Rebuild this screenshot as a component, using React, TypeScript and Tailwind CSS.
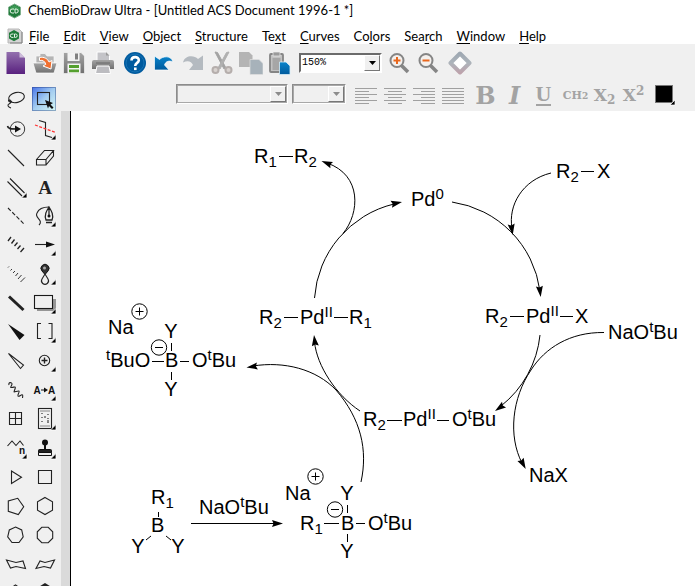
import React from "react";

function Logo() {
  return (
    <svg width="15" height="16" viewBox="0 0 15 16" aria-hidden="true" className="shrink-0">
      <path d="M7.5 1L13.5 4.2V11.8L7.5 15L1.5 11.8V4.2Z" fill="#1f7a3a" stroke="#7fb08d" strokeWidth="1" />
      <path d="M7.5 2L12.5 5V7.5H2.5V5Z" fill="#3c9a55" />
      <path d="M7 6H5.2a2 2 0 0 0 0 4H7M8 6v4h1.2a2 2 0 0 0 0-4Z" fill="none" stroke="#e8f5e9" strokeWidth="1" />
    </svg>
  );
}

function DocLogo() {
  return (
    <svg width="16" height="16" viewBox="0 0 16 16" aria-hidden="true" className="shrink-0">
      <path d="M1 1H12L15 4V15H1Z" fill="#d4d4d4" stroke="#b8b8b8" />
      <path d="M15 4V15H3" fill="none" stroke="#808080" />
      <path d="M7 2L12 4.800V10.500L7 13.300L2 10.500V4.800Z" fill="#1f7a3a" />
      <path d="M6.5 6H5a1.700 1.700 0 0 0 0 3.400H6.500M7.500 6v3.400h1a1.700 1.700 0 0 0 0-3.400Z" fill="none" stroke="#e8f5e9" strokeWidth="1" />
    </svg>
  );
}

const menus: [string, string, string][] = [
  ["", "F", "ile"],
  ["", "E", "dit"],
  ["", "V", "iew"],
  ["", "O", "bject"],
  ["", "S", "tructure"],
  ["Te", "x", "t"],
  ["", "C", "urves"],
  ["Co", "l", "ors"],
  ["Sea", "r", "ch"],
  ["", "W", "indow"],
  ["", "H", "elp"],
];

function BarButton({ label, children }: { label: string; children: React.ReactNode }) {
  return (
    <button type="button" aria-label={label} title={label} className="flex h-7 w-[29px] shrink-0 items-center justify-center">
      <svg width="24" height="24" viewBox="0 0 24 24" aria-hidden="true">
        {children}
      </svg>
    </button>
  );
}

function Combo({ label, value, box, disabled }: { label: string; value: string; box: string; disabled?: boolean }) {
  return (
    <div className={`relative h-5 shrink-0 border-2 border-b-white border-r-white ${disabled ? "border-l-[#8c8c8c] border-t-[#8c8c8c] bg-[#f0f0f0] outline-1 -outline-offset-2 outline-[#a8a8a8]" : "border-l-[#6b6b6b] border-t-[#6b6b6b] bg-white"} ${box}`}>
      <select aria-label={label} disabled={disabled} defaultValue={value} className="block h-4 w-full appearance-none bg-transparent pl-px font-['Liberation_Mono',monospace] text-[10px] leading-4 text-black outline-none">
        <option>{value}</option>
      </select>
      <span className="pointer-events-none absolute right-0 top-0 flex h-4 w-4 items-center justify-center border border-b-[#777] border-l-white border-r-[#777] border-t-white bg-[#f0f0f0]">
        <svg width="7" height="4" viewBox="0 0 7 4" aria-hidden="true">
          <path d="M0 0H7L3.5 4Z" fill={disabled ? "#8c8c8c" : "#000"} />
        </svg>
      </span>
    </div>
  );
}

function MainToolbar() {
  return (
    <div role="toolbar" aria-label="Main" className="flex h-[37px] shrink-0 items-center bg-[#f0f0f0] pl-px">
      <svg width="0" height="0" className="absolute" aria-hidden="true">
        <defs>
          <linearGradient id="violet" x1="0" y1="0" x2="0" y2="1">
            <stop offset="0" stopColor="#9370ae" />
            <stop offset="1" stopColor="#59217f" />
          </linearGradient>
          <linearGradient id="steel" x1="0" y1="0" x2="0" y2="1">
            <stop offset="0" stopColor="#a4a4a4" />
            <stop offset="1" stopColor="#707070" />
          </linearGradient>
          <linearGradient id="diamond" x1="0" y1="0" x2="0" y2="1">
            <stop offset="0" stopColor="#9ea8b2" />
            <stop offset="0.5" stopColor="#adb4bb" />
            <stop offset="1" stopColor="#bda3ac" />
          </linearGradient>
          <linearGradient id="azure" x1="0" y1="0" x2="0" y2="1">
            <stop offset="0" stopColor="#0a84cb" />
            <stop offset="1" stopColor="#005a9c" />
          </linearGradient>
        </defs>
      </svg>
      <BarButton label="New document">
        <path d="M2.500 1H15L21 7V23H2.500Z" fill="url(#violet)" />
        <path d="M15.500 1V6.500H21Z" fill="#cdbcda" />
        <path d="M15 0L21.500 6.500V0Z" fill="#f0f0f0" />
      </BarButton>
      <BarButton label="Open">
        <path d="M3 12V5H7V2.500H12L14 5H21V12Z" fill="#b5b5b5" stroke="#f8f8f8" strokeWidth=".7" />
        <path d="M0 12H24L21 22H3Z" fill="url(#steel)" stroke="#fff" strokeWidth=".7" />
        <path d="M6.500 6.500C11 5.500 15 8 16 11L19 9.500L18 18L10 15L12.800 13.300C12 10.500 10 8.800 6.500 9.500Z" fill="#f07030" stroke="#fff" />
      </BarButton>
      <BarButton label="Save">
        <path d="M1.500 1.500H19L22.500 5V22.500H1.500Z" fill="url(#steel)" stroke="#fff" strokeWidth=".6" />
        <rect x="5.500" y="1.500" width="12" height="8.500" fill="#f2f2f2" />
        <rect x="13" y="2.500" width="3" height="6" fill="#808080" />
        <rect x="5.500" y="12.500" width="13" height="10" fill="#f5f5f5" />
        <path d="M7 15.500H17M7 19.800H17" stroke="#55a02f" strokeWidth="2.800" />
      </BarButton>
      <BarButton label="Print">
        <path d="M6 1H15L18.500 4.500V10H6Z" fill="#c4c4c8" stroke="#fff" />
        <path d="M15 1V4.500H18.500Z" fill="#9a9a9a" />
        <path d="M1 11Q1 9 3 9H21Q23 9 23 11V18H1Z" fill="url(#steel)" />
        <path d="M5 12H19" stroke="#6a6a6a" />
        <path d="M6 15H18L19.500 22.500H4.500Z" fill="#bcbcc0" stroke="#fff" />
      </BarButton>
      <span className="w-[3px] shrink-0" />
      <BarButton label="Help">
        <circle cx="12" cy="12" r="11" fill="#005b9f" />
        <circle cx="12" cy="12" r="9" fill="none" stroke="#1773b4" />
        <path d="M8.500 9.500C8.500 5 15.800 5 15.800 9.200C15.800 12 12.200 11.800 12.200 15" fill="none" stroke="#fff" strokeWidth="2.600" />
        <rect x="11" y="16.500" width="2.600" height="2.600" fill="#fff" />
      </BarButton>
      <BarButton label="Undo">
        <path d="M2.500 5L7.500 8.500C11 5 19 4 21 11C17 9 13.500 10.500 12.500 14L17 19H2.500Z" fill="url(#azure)" stroke="#fff" strokeWidth=".7" />
      </BarButton>
      <BarButton label="Redo">
        <path d="M22 4.500L17 8C13 4 4 4 2 11.500C7 9 10.500 10.500 12 14L8 19H22Z" fill="#b4bac0" />
      </BarButton>
      <BarButton label="Cut">
        <path d="M5 1L7.500 1.500L16 17L14 18Z" fill="#a3a3a3" stroke="#a3a3a3" />
        <path d="M19 1L16.500 1.500L8 17L10 18Z" fill="#b0b0b0" stroke="#b0b0b0" />
        <circle cx="5.500" cy="19" r="3" fill="#d8d2cf" stroke="#b5aeac" strokeWidth="2" />
        <circle cx="18.500" cy="19" r="3" fill="#d8d2cf" stroke="#b5aeac" strokeWidth="2" />
      </BarButton>
      <BarButton label="Copy">
        <path d="M0 1H10L13.500 4.500V16H0Z" fill="#b4b4b4" />
        <path d="M11 8.500H20L24 12.500V23.500H11Z" fill="#a7b2ba" stroke="#e0e0e0" strokeWidth=".7" />
      </BarButton>
      <BarButton label="Paste">
        <rect x="2" y="3" width="13" height="18" rx="1" fill="#c2c2c2" stroke="#858585" strokeWidth="1.800" />
        <rect x="4.500" y="7" width="8" height="12" fill="#a6a6a6" />
        <rect x="5" y="1" width="7" height="4" fill="#9a9a9a" stroke="#eee" strokeWidth=".7" />
        <path d="M11.500 11H18L22 15V23.500H11.500Z" fill="url(#azure)" stroke="#d8edf8" strokeWidth=".8" />
      </BarButton>
      <span className="w-[5px] shrink-0" />
      <Combo label="Zoom level" value="150%" box="w-[83px]" />
      <span className="w-[2px] shrink-0" />
      <BarButton label="Zoom in">
        <path d="M14 14L21 21" stroke="#858585" strokeWidth="3.600" />
        <circle cx="10" cy="9.500" r="6.500" fill="#f4f0ed" stroke="#858585" strokeWidth="2" />
        <path d="M6.500 9.500H13.500M10 6V13" stroke="#e8661c" strokeWidth="2" />
      </BarButton>
      <BarButton label="Zoom out">
        <path d="M14 14L21 21" stroke="#858585" strokeWidth="3.600" />
        <circle cx="10" cy="9.500" r="6.500" fill="#f4f0ed" stroke="#858585" strokeWidth="2" />
        <path d="M6.500 9.500H13.500" stroke="#e8661c" strokeWidth="2" />
      </BarButton>
      <span className="w-[3px] shrink-0" />
      <BarButton label="Chemical properties">
        <path d="M12 2.500L21.500 12L12 21.500L2.500 12Z" fill="#fff" stroke="url(#diamond)" strokeWidth="4" strokeLinejoin="round" />
      </BarButton>
    </div>
  );
}

const aligns: [string, string][] = [
  ["Align left", "M1 4.500H23M1 7.500H15M1 10.500H23M1 13.500H15M1 16.500H23M1 19.500H15"],
  ["Align center", "M1 4.500H23M5 7.500H19M1 10.500H23M5 13.500H19M1 16.500H23M5 19.500H19"],
  ["Align right", "M1 4.500H23M9 7.500H23M1 10.500H23M9 13.500H23M1 16.500H23M9 19.500H23"],
  ["Justify", "M1 4.500H23M1 7.500H23M1 10.500H23M1 13.500H23M1 16.500H23M1 19.500H23"],
];

function FormatToolbar() {
  const glyph = "flex h-6 w-[29px] shrink-0 items-center justify-center font-['DejaVu_Serif',serif] font-bold text-[#a3a3a3]";
  return (
    <div role="toolbar" aria-label="Text format" className="flex h-[30px] shrink-0 items-start bg-[#f0f0f0] pl-[115px] pt-[3px]">
      <Combo label="Font" value="" box="w-[112px]" disabled />
      <span className="w-1 shrink-0" />
      <Combo label="Font size" value="" box="w-[54px]" disabled />
      <span className="w-[5px] shrink-0" />
      {aligns.map(([label, d]) => (
        <button key={label} type="button" aria-label={label} className="flex h-6 w-[29px] shrink-0 items-center justify-center">
          <svg width="24" height="24" viewBox="0 0 24 24" aria-hidden="true">
            <path d={d} stroke="#a0a0a0" />
          </svg>
        </button>
      ))}
      <span className="w-1 shrink-0" />
      <button type="button" className={`${glyph} text-[24px]`}>B</button>
      <button type="button" className={`${glyph} text-[24px] italic`}>I</button>
      <button type="button" className={`${glyph} text-[22px]`}>
        <span className="h-5 border-b-2 border-[#a3a3a3] font-['Liberation_Serif',serif] leading-4">U</span>
      </button>
      <span className="w-[3px] shrink-0" />
      <button type="button" className={`${glyph} text-[11px]`}>
        <span>CH<sub className="bottom-0 text-[9px]">2</sub></span>
      </button>
      <button type="button" className={`${glyph} text-[17px]`}>
        <span>X<sub className="text-[12px]">2</sub></span>
      </button>
      <button type="button" className={`${glyph} text-[17px]`}>
        <span>X<sup className="text-[12px]">2</sup></span>
      </button>
      <button type="button" aria-label="Text color" className="ml-[6px] flex h-6 w-6 shrink-0">
        <svg width="24" height="24" viewBox="0 0 24 24" aria-hidden="true">
          <rect x="1.500" y="1.500" width="17" height="17" fill="#000" stroke="#777" />
          <path d="M21 16V21H16Z" fill="#000" stroke="#fff" strokeWidth=".7" />
        </svg>
      </button>
    </div>
  );
}

const stroke = { fill: "none", stroke: "#222", strokeWidth: 1.1 };

const tools: { label: string; more?: boolean; selected?: boolean; art: React.ReactNode }[] = [
  {
    label: "Lasso",
    art: (
      <g {...stroke}>
        <ellipse cx="13.500" cy="10.500" rx="8" ry="5" transform="rotate(-14 13.500 10.500)" />
        <path d="M9 14.500C6 16 4 12.500 7 13C9 14 8 16 6 17C4 18 5 20 8 21" />
      </g>
    ),
  },
  {
    label: "Marquee",
    selected: true,
    art: (
      <g>
        <rect x="5.500" y="5.500" width="12" height="12" {...stroke} />
        <path d="M13 13L21 16L18.500 17.500L21.500 20.500L20 22L17 19L16 21.500Z" fill="#111" />
      </g>
    ),
  },
  {
    label: "Structure perspective",
    art: (
      <g>
        <circle cx="14.500" cy="13" r="7.200" {...stroke} strokeWidth=".9" />
        <path d="M4.500 10C5 13 8 13 14 13" {...stroke} strokeWidth="1.600" />
        <path d="M12 9.500L18 13L12 16.500Z" fill="#111" />
      </g>
    ),
  },
  {
    label: "Mass fragmentation",
    more: true,
    art: (
      <g>
        <path d="M7 4.500L13.500 6.500V19.500L20 21.500" {...stroke} />
        <path d="M3 9L24 16.500" stroke="#f33" strokeWidth="1.300" strokeDasharray="3 1.500" />
      </g>
    ),
  },
  { label: "Solid bond", art: <path d="M5 5L21 21" {...stroke} /> },
  { label: "Eraser", art: <path d="M4.500 14.500H14V20H4.500ZM4.500 14.500L12.500 5.500H21.500L14 14.500M21.500 5.500V11L14 20" {...stroke} /> },
  { label: "Multiple bonds", more: true, art: <path d="M4.500 7.500L19 22M7 4.500L21.500 19" {...stroke} /> },
  { label: "Text", art: <text x="13" y="19.500" textAnchor="middle" fontFamily="Liberation Serif, serif" fontSize="19" fontWeight="bold" fill="#222">A</text> },
  { label: "Dashed bond", art: <path d="M5 5L21 21" {...stroke} strokeDasharray="4 2" /> },
  {
    label: "Pen",
    more: true,
    art: (
      <g>
        <path d="M7 22C12 17 2 15 5 10C7 5 12 4 17 4" {...stroke} />
        <path d="M17 4V13M17 4C19.500 8 22 12 20 17H14C12 12 14.500 8 17 4ZM14 19.500H20" {...stroke} strokeWidth="1.300" />
        <circle cx="17" cy="13" r="1.500" fill="#111" />
      </g>
    ),
  },
  { label: "Hashed bond", art: <path d="M5 9L8 5M8.500 11.500L11.500 7.500M11.500 14L14.500 10.500M14.500 17L17.500 13.500M17.500 20L21 16" {...stroke} strokeWidth="1.300" /> },
  {
    label: "Arrow",
    more: true,
    art: (
      <g>
        <path d="M3 12.500H16" {...stroke} />
        <path d="M23 12.500L14 9.500V15.500Z" fill="#111" />
      </g>
    ),
  },
  { label: "Hashed wedged bond", art: <path d="M5 6.500L6 5.500M7.500 9.500L9 8M10 12L12 10M12.500 15L15 12M15 18L18.500 14M17.500 21L22 16.500" {...stroke} strokeWidth=".9" /> },
  {
    label: "Orbital",
    more: true,
    art: (
      <g>
        <path d="M13 13.500L10 10A4 4 0 1 1 16 10Z" fill="#333" stroke="#111" />
        <circle cx="12.500" cy="7" r="1.500" fill="#aaa" />
        <path d="M13 13L10 18A3.500 3.500 0 1 0 16 18Z" {...stroke} />
      </g>
    ),
  },
  { label: "Bold bond", art: <path d="M6 6.500L20.500 20" {...stroke} strokeWidth="3" /> },
  {
    label: "Drawing elements",
    more: true,
    art: (
      <g>
        <rect x="5" y="9" width="19" height="12" fill="#969696" />
        <rect x="2.500" y="5.500" width="18" height="13" fill="#f0f0f0" stroke="#1a1a1a" strokeWidth="1.100" />
      </g>
    ),
  },
  { label: "Wedged bond", art: <path d="M5 5L21.500 16L16.500 21Z" fill="#111" /> },
  { label: "Brackets", more: true, art: <path d="M9 4.500H5.500V19.500H9M16.500 4.500H20V19.500H16.500" {...stroke} /> },
  { label: "Hollow wedged bond", art: <path d="M5.500 5.500L20.500 17L17.500 20.500Z" {...stroke} /> },
  {
    label: "Chemical symbols",
    more: true,
    art: (
      <g {...stroke}>
        <circle cx="12.500" cy="12.500" r="5.200" />
        <path d="M9.500 12.500H15.500M12.500 9.500V15.500" strokeWidth="1.400" />
      </g>
    ),
  },
  { label: "Wavy bond", art: <path d="M6 8C5 5 9 5 9 7S6 11 9 10.500S13 9 12 12S10 15.500 13 14.500S17 13.500 15.500 16.500S15 20 17.500 18.500S20 18 19.500 21" {...stroke} /> },
  {
    label: "Alter atom",
    more: true,
    art: (
      <g fill="#111" fontFamily="Liberation Sans, sans-serif" fontSize="10" fontWeight="bold">
        <text x="1.500" y="16.500">A</text>
        <text x="16" y="16.500">A</text>
        <path d="M9 12.500H12V10.500L16 13L12 15.500V13.500H9Z" />
      </g>
    ),
  },
  { label: "Table", art: <path d="M6.500 6.500H18.500V18.500H6.500ZM12.500 6.500V18.500M6.500 12.500H18.500" {...stroke} /> },
  {
    label: "TLC plate",
    more: true,
    art: (
      <g {...stroke}>
        <rect x="6.500" y="2.500" width="13" height="20" />
        <path d="M8.500 5H18M8.500 20H18" strokeDasharray="1 1" />
        <path d="M10 7V18M16 8V18" strokeDasharray="1 3" />
        <path d="M12 11H14M15 15H17" />
      </g>
    ),
  },
  {
    label: "Acyclic chain",
    more: true,
    art: (
      <g>
        <path d="M4.500 11L9 6L13 10.500L17 6L20.500 10.500" {...stroke} />
        <text x="16" y="19" fontFamily="Liberation Sans, sans-serif" fontSize="10" fontWeight="bold" fill="#111">n</text>
      </g>
    ),
  },
  {
    label: "Template stamp",
    more: true,
    art: (
      <g>
        <circle cx="13" cy="7.500" r="3" fill="#111" />
        <path d="M13 9V15" stroke="#111" strokeWidth="2" />
        <rect x="6.500" y="14.500" width="13" height="4" rx="1" fill="#222" stroke="#111" />
        <path d="M6.500 17.500H19.500V20.500H6.500Z" fill="#f0f0f0" stroke="#111" />
      </g>
    ),
  },
  { label: "Cyclopropane ring", art: <path d="M8.500 7V19.500L18.500 13.200Z" {...stroke} /> },
  { label: "Cyclobutane ring", art: <path d="M6.500 6.500H19.500V19.500H6.500Z" {...stroke} /> },
  { label: "Cyclopentane ring", art: <path d="M14.700 5.300L20.700 13.700L15.300 21.500L5.300 18.300V8Z" {...stroke} /> },
  { label: "Cyclohexane ring", art: <path d="M13 4.500L20.500 8.800V17.300L13 21.500L5.500 17.300V8.800Z" {...stroke} /> },
  { label: "Cycloheptane ring", art: <path d="M12.500 5L18.700 8L20.200 14.800L16 20.500H9L4.700 14.800L6.300 8Z" {...stroke} /> },
  { label: "Cyclooctane ring", art: <path d="M9.800 5.300H16.200L20.700 9.800V16.200L16.200 20.700H9.800L5.300 16.200V9.800Z" {...stroke} /> },
  { label: "Chair ring", art: <path d="M3.500 9L13 11.500L20 10L22.500 17.500L13 15.500L7.500 17Z" {...stroke} /> },
  { label: "Mirrored chair ring", art: <path d="M22.500 9L13 11.500L8 10L4 17.500L12 15.500L18.500 17Z" {...stroke} /> },
  { label: "Cyclopentadiene ring", art: <path d="M12.500 5L20 10L17 19H8L5 10Z" {...stroke} /> },
  { label: "Benzene ring", art: <path d="M13 3L21 8V17L13 21L5 17V8Z" fill="#222" /> },
];

function Palette() {
  return (
    <div role="toolbar" aria-label="Tools" className="grid w-[61px] shrink-0 grid-cols-[24px_24px] content-start gap-[5px] overflow-hidden bg-[#f0f0f0] pl-[3px] pt-[6px]">
      {tools.map((tool) => (
        <button
          key={tool.label}
          type="button"
          aria-label={tool.label}
          aria-pressed={tool.selected ?? false}
          className={`h-6 w-6 ${tool.selected ? "bg-linear-to-br from-[#4a70e6] via-[#a4cdf0] to-[#d8faf5] inset-ring inset-ring-[#1c3478]/40" : ""}`}
        >
          <svg width="24" height="24" viewBox="0 0 24 24" className="overflow-visible" aria-hidden="true">
            {tool.art}
            {tool.more && <path d="M24 18.500V24H18.500Z" fill="#000" stroke="#fff" strokeWidth=".8" />}
          </svg>
        </button>
      ))}
    </div>
  );
}

type Part = string | { sub: string } | { sup: string };

/* One formula label: subscripts sit 4px below the baseline, superscripts 7px above it. */
function Label({ x, y, parts, middle }: { x: number; y: number; parts: Part[]; middle?: boolean }) {
  let shift = 0;
  return (
    <text x={x} y={y} textAnchor={middle ? "middle" : "start"}>
      {parts.map((part, i) => {
        const text = typeof part === "string" ? part : "sub" in part ? part.sub : part.sup;
        const level = typeof part === "string" ? 0 : "sub" in part ? 4 : -7;
        const dy = level - shift;
        shift = level;
        return (
          <tspan key={i} dy={dy} fontSize={level === 0 ? 20 : 15}>
            {text}
          </tspan>
        );
      })}
    </text>
  );
}

function Head({ x, y, angle }: { x: number; y: number; angle: number }) {
  return <path d="M0 0L-11 -3.500L-9.500 0L-11 3.500Z" fill="#000" stroke="none" transform={`translate(${x} ${y}) rotate(${angle})`} />;
}

function Charge({ x, y, plus }: { x: number; y: number; plus?: boolean }) {
  return (
    <g>
      <circle cx={x} cy={y} r="7.700" />
      <path d={plus ? `M${x - 4} ${y}h8M${x} ${y - 4}v8` : `M${x - 4} ${y}h8`} />
    </g>
  );
}

function Reaction() {
  const one = { sub: "1" };
  const two = { sub: "2" };
  const t = { sup: "t" };
  const ii = { sup: "II" };
  return (
    <svg width="624" height="475" viewBox="71 111 624 475" role="img" aria-label="Suzuki coupling catalytic cycle" className="block shrink-0">
      <g fill="#000" fontFamily="Liberation Sans, Arial, sans-serif" fontSize="20">
        <Label x={254} y={163} parts={["R", one]} />
        <Label x={294} y={163} parts={["R", two]} />
        <Label x={411} y={206} parts={["Pd", { sup: "0" }]} />
        <Label x={556} y={178} parts={["R", two]} />
        <Label x={597} y={178} parts={["X"]} />
        <Label x={259} y={324} parts={["R", two]} />
        <Label x={300} y={324} parts={["Pd", ii]} />
        <Label x={349} y={324} parts={["R", one]} />
        <Label x={485} y={323} parts={["R", two]} />
        <Label x={526} y={323} parts={["Pd", ii]} />
        <Label x={575} y={323} parts={["X"]} />
        <Label x={608} y={339} parts={["NaO", t, "Bu"]} />
        <Label x={363} y={426} parts={["R", two]} />
        <Label x={403} y={426} parts={["Pd", ii]} />
        <Label x={452} y={426} parts={["O", t, "Bu"]} />
        <Label x={529} y={482} parts={["NaX"]} />
        <Label x={108} y={334} parts={["Na"]} />
        <Label x={171} y={338} parts={["Y"]} middle />
        <Label x={106} y={367} parts={[t, "BuO"]} />
        <Label x={165} y={367} parts={["B"]} />
        <Label x={192} y={367} parts={["O", t, "Bu"]} />
        <Label x={171} y={396} parts={["Y"]} middle />
        <Label x={151} y={504} parts={["R", one]} />
        <Label x={151} y={532} parts={["B"]} />
        <Label x={138} y={553} parts={["Y"]} middle />
        <Label x={178} y={553} parts={["Y"]} middle />
        <Label x={199} y={514} parts={["NaO", t, "Bu"]} />
        <Label x={285} y={500} parts={["Na"]} />
        <Label x={347} y={500} parts={["Y"]} middle />
        <Label x={300} y={530} parts={["R", one]} />
        <Label x={341} y={530} parts={["B"]} />
        <Label x={368} y={530} parts={["O", t, "Bu"]} />
        <Label x={347} y={558} parts={["Y"]} middle />
      </g>
      <g fill="none" stroke="#000" strokeWidth="1">
        <path d="M279 156.500H293M581 171.500H594M284 317.500H298M334 317.500H348M510 316.500H524M560 316.500H573M387 420.500H402M437 420.500H449" />
        <path d="M152 361.500H164M180 361.500H189M171.500 343V351M171.500 372V380" />
        <path d="M158.500 512V517M151 536L146 540M166 536L171 540" />
        <path d="M324 523.500H339M356 523.500H365M347.500 505V513M347.500 534V542" />
        <Charge x={139.5} y={311.5} plus />
        <Charge x={159} y={347.5} />
        <Charge x={315.5} y={476.5} plus />
        <Charge x={335} y={509.5} />

        <path d="M314.500 298A104 104 0 0 1 394 204" />
        <Head x={402} y={202} angle={-12} />
        <path d="M343 233.500C360 213 362 175 327 163" />
        <Head x={321.5} y={161} angle={202} />
        <path d="M452 202A104 104 0 0 1 540 291" />
        <Head x={540.7} y={297} angle={83} />
        <path d="M551 173C522 180 508 206 512 228" />
        <Head x={512.7} y={235} angle={82} />
        <path d="M540 335A104 104 0 0 1 501 406" />
        <Head x={495} y={411} angle={145} />
        <path d="M604 332.500C570 332 545 348 531 370C512 398 508 436 522 463" />
        <Head x={525.7} y={469} angle={62} />
        <path d="M360 411C336 395 317 366 314.500 342" />
        <Head x={314} y={335} angle={-97} />
        <path d="M361 482C368 450 361 419 336 390C316 369 284 361 253 366" />
        <Head x={246.5} y={367.5} angle={172} />
        <path d="M191 523.500H274" />
        <Head x={283} y={523.5} angle={0} />
      </g>
    </svg>
  );
}

export default function App() {
  return (
    <div className="flex h-screen flex-col overflow-hidden bg-white font-['Lato','Open_Sans',sans-serif] text-[13px] text-black">
      <header className="flex h-[22px] shrink-0 items-center gap-[6px] pl-[7px]">
        <Logo />
        <h1>ChemBioDraw Ultra - [Untitled ACS Document 1996-1 *]</h1>
      </header>
      <nav aria-label="Menu" className="flex h-[22px] shrink-0 items-end gap-[14px] pl-[7px] leading-4">
        <span className="-mr-2"><DocLogo /></span>
        {menus.map(([before, key, after]) => (
          <button key={before + key + after} type="button" className="shrink-0">
            {before}
            <span className="underline underline-offset-2">{key}</span>
            {after}
          </button>
        ))}
      </nav>
      <MainToolbar />
      <div className="flex min-h-0 flex-1">
        <Palette />
        <div className="flex min-w-0 flex-1 flex-col">
          <FormatToolbar />
          <main className="flex min-h-0 flex-1 overflow-hidden">
            <div className="w-[9px] shrink-0 bg-[#dadada]" />
            <div className="min-w-0 flex-1 overflow-hidden border-l border-black bg-white">
              <Reaction />
            </div>
          </main>
        </div>
      </div>
    </div>
  );
}
